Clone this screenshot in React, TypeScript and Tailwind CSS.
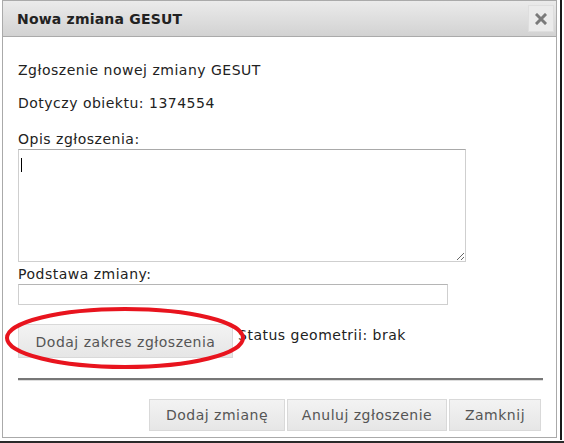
import React from "react";

function CloseIcon() {
  return (
    <svg width="12" height="12" viewBox="0 0 12 12">
      <path d="M2 2 L10 10 M10 2 L2 10" stroke="#7a7a7a" strokeWidth="3" strokeLinecap="square" />
    </svg>
  );
}

function Btn({ label, className = "" }: { label: string; className?: string }) {
  return (
    <button
      className={`flex items-center justify-center border border-[#d9d9d9] bg-gradient-to-b from-[#f3f3f3] to-[#e6e6e6] text-[14px] tracking-[0.5px] text-[#555] ${className}`}
    >
      {label}
    </button>
  );
}

export default function App() {
  return (
    <div className="relative h-[443px] w-[564px] overflow-hidden bg-white font-['DejaVu_Sans',sans-serif] text-[14px] leading-4 tracking-[0.5px] text-[#222]">
      <div className="flex">
        <div className="ml-[2px] flex h-[438px] w-[555px] flex-col border border-[#aaa] bg-white">
          {/* title bar */}
          <div className="flex h-[36px] items-center justify-between border-b border-[#aaa] bg-gradient-to-b from-[#ebebeb] to-[#d2d2d2] pl-[14px] pr-[2px]">
            <span className="text-[14px] font-bold tracking-[0.2px] text-[#222]">Nowa zmiana GESUT</span>
            <div className="flex h-[27px] w-[26px] items-center justify-center border border-[#dedede] bg-[#ebebeb]">
              <CloseIcon />
            </div>
          </div>

          {/* body */}
          <div className="flex flex-col px-[15px] pt-[25px]">
            <div className="h-4">Zgłoszenie nowej zmiany GESUT</div>
            <div className="mt-[17px] h-4">Dotyczy obiektu: 1374554</div>
            <div className="mt-[20px] h-4">Opis zgłoszenia:</div>
            <div className="relative mt-[2px] h-[113px] w-[448px]">
              <textarea
                readOnly
                className="h-full w-full border border-[#cfcfcf] border-t-[#a9a9a9] bg-white outline-none"
              />
              <div className="absolute left-[3px] top-[9px] h-[14px] w-px bg-black" />
            </div>
            <div className="mt-[4px] h-4">Podstawa zmiany:</div>
            <div className="mt-[2px] h-[21px] w-[430px] border border-[#cfcfcf] border-t-[#b5b5b5] bg-white" />

            <div className="relative mt-[19px] flex items-start">
              <Btn label="Dodaj zakres zgłoszenia" className="h-[34px] w-[215px] pt-[2px]" />
              <span className="ml-[5px] mt-[3px]">Status geometrii: brak</span>
              <svg
                className="absolute left-[-15px] top-[-17px]"
                width="244"
                height="66"
                viewBox="0 0 244 66"
              >
                <ellipse cx="122" cy="31" rx="118" ry="29" fill="none" stroke="#e8141e" strokeWidth="4" />
              </svg>
            </div>

            <div className="mt-[20px] h-[3px] w-[525px] border-t-2 border-[#777] border-b border-b-[#ddd]" />

            <div className="mt-[18px] flex justify-end gap-[2px]">
              <Btn label="Dodaj zmianę" className="h-[32px] w-[136px]" />
              <Btn label="Anuluj zgłoszenie" className="h-[32px] w-[160px]" />
              <Btn label="Zamknij" className="h-[32px] w-[92px]" />
            </div>
          </div>
        </div>
        <div className="ml-[3px] h-[440px] w-[2px] bg-[#1a1a1a]" />
      </div>
      <div className="mt-[1px] h-[4px] w-full bg-[#2a2a2a]" />
    </div>
  );
}
